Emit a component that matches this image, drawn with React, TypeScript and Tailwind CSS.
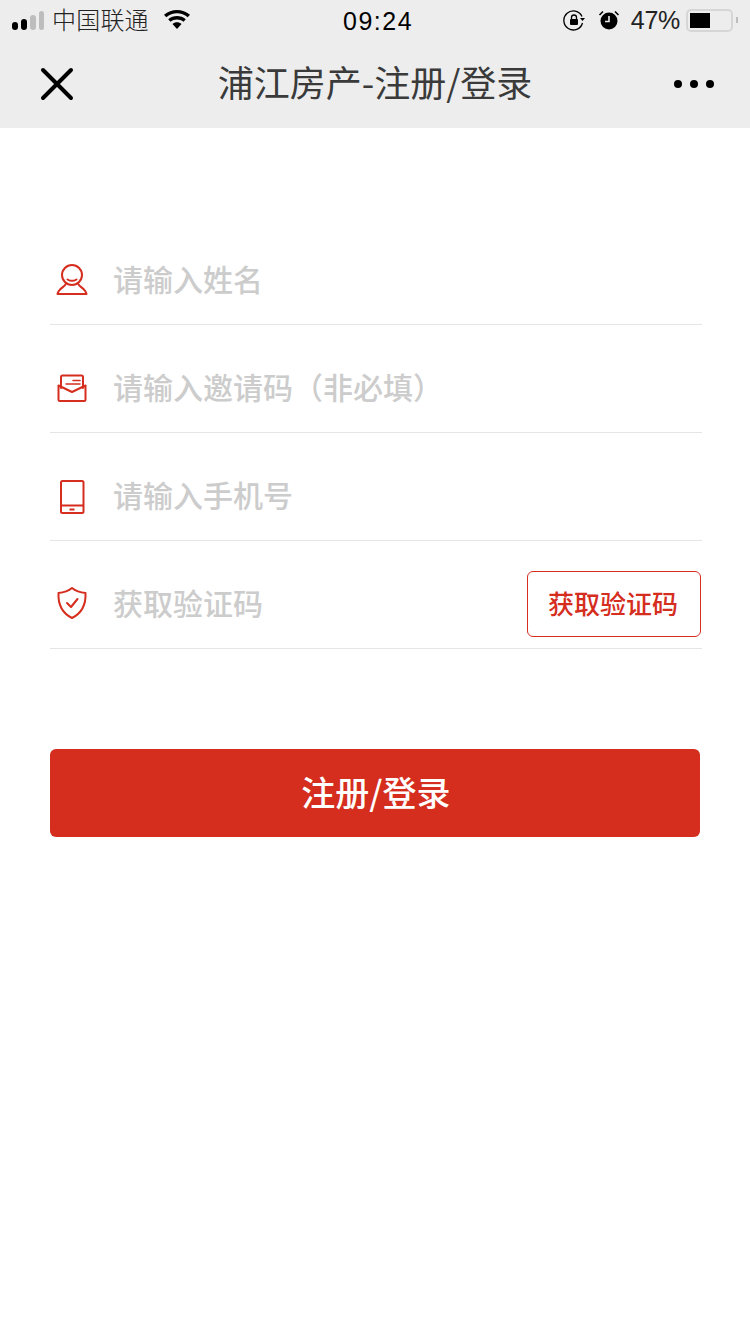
import { useState } from 'react';

const FONT = "font-['Noto_Sans_CJK_SC','Liberation_Sans',sans-serif]";

function UserIcon() {
  return (
    <svg width="32" height="32" viewBox="0 0 32 32" fill="none" stroke="#d52d1e" strokeWidth="2" strokeLinejoin="round" strokeLinecap="round">
      <circle cx="16" cy="11" r="10" />
      <path d="M11.500 15.500c2.500 1.500 6.500 1.500 9 0" />
      <path d="M10 19.500c-1 3.500-7.500 5-8.500 10.500h29C29.500 24.500 23 23 22 19.500" />
    </svg>
  );
}

function MailIcon() {
  return (
    <svg width="32" height="32" viewBox="0 0 32 32" fill="none" stroke="#d52d1e" strokeWidth="2" strokeLinejoin="round" strokeLinecap="round">
      <path d="M5 16V5C5 4 5.500 3.500 6.500 3.500h19c1 0 1.500.5 1.500 1.500v11" />
      <path d="M2.500 13.500v14c0 1 .5 1.500 1.500 1.500h24c1 0 1.500-.5 1.500-1.500v-14L16 20z" />
      <path d="M10 12h14M17 8.500h7" strokeWidth="1.500" />
    </svg>
  );
}

function PhoneIcon() {
  return (
    <svg className="mt-[2px]" width="32" height="34" viewBox="0 0 32 34" fill="none" stroke="#d52d1e" strokeWidth="2" strokeLinejoin="round">
      <rect x="5" y="1" width="22.500" height="32" rx="1.500" />
      <path d="M5 25.500h22.500" />
      <path d="M13.500 29.500h5" />
    </svg>
  );
}

function ShieldIcon() {
  return (
    <svg className="mb-[2px]" width="32" height="34" viewBox="0 0 32 34" fill="none" stroke="#d52d1e" strokeWidth="2" strokeLinejoin="round" strokeLinecap="round">
      <path d="M16 2c3 2.500 8 4.500 13.500 5 .5 10-2.500 19.500-13.500 25C5 26.500 2 17 2.500 7 8 6.500 13 4.500 16 2z" />
      <path d="M11 17l4 4 6.500-8" />
    </svg>
  );
}

function SignalDots() {
  return (
    <div className="flex items-end gap-[3px]">
      <span className="w-[6px] h-[8px] rounded-full bg-black" />
      <span className="w-[6px] h-[11px] rounded-full bg-black" />
      <span className="w-[6px] h-[15px] rounded-full bg-[#bdbdbd]" />
      <span className="w-[5px] h-[19px] rounded-full bg-[#bdbdbd]" />
    </div>
  );
}

function Wifi() {
  return (
    <svg width="28" height="20" viewBox="0 0 28 20" fill="#000">
      <path d="M14 20l-4.500-5c2.500-2.200 6.500-2.200 9 0z" />
      <path d="M7.500 12.800L5.200 10.300c5-4.300 12.600-4.300 17.600 0l-2.300 2.500c-3.700-3.100-9.300-3.100-13 0z" />
      <path d="M3.300 8.200L1 5.700c7.400-6.400 18.600-6.400 26 0l-2.300 2.500C18.500 2.800 9.500 2.800 3.300 8.200z" />
    </svg>
  );
}

function StatusBar() {
  return (
    <div className="h-10 flex items-center justify-between relative text-black">
      <div className="flex items-center">
        <div className="ml-3"><SignalDots /></div>
        <span className="ml-[8px] text-[24px] leading-none tracking-[0.2px] font-light text-[#222] pb-[2px]">中国联通</span>
        <div className="ml-[14px] mb-[2px]"><Wifi /></div>
      </div>
      <span className="absolute left-[343px] top-[6px] text-[25px] leading-[30px] tracking-[1.500px] font-['Liberation_Sans',sans-serif]">09:24</span>
      <div className="flex items-center">
        <svg width="22" height="22" viewBox="0 0 22 22" fill="none" stroke="#000" strokeWidth="1.300">
          <path d="M19 7.500A9.500 9.500 0 1 0 19.500 14" />
          <path d="M17 9h5l-2.500 3z" fill="#000" stroke="none" />
          <rect x="7" y="10" width="8" height="6" rx="1" fill="#000" stroke="none" />
          <path d="M8.500 10V8.500a2.500 2.500 0 0 1 5 0V10" />
        </svg>
        <svg className="ml-[13px]" width="22" height="22" viewBox="0 0 22 22" fill="#000">
          <circle cx="11" cy="12" r="8.500" />
          <path d="M11 7v5.500H7" fill="none" stroke="#ececec" strokeWidth="1.600" />
          <path d="M1.500 6L5 2.500M20.500 6L17 2.500" stroke="#000" strokeWidth="1.600" />
        </svg>
        <span className="ml-[11px] text-[25px] leading-none tracking-[-0.3px] text-[#222] font-['Liberation_Sans',sans-serif] font-light">47%</span>
        <div className="ml-[6px] w-[47px] h-[23px] rounded-[5px] border-2 border-[#d6d6d6] p-[2px]">
          <div className="w-[20px] h-full bg-black" />
        </div>
        <div className="ml-[3px] mr-[12px] w-[2px] h-[6px] bg-[#bdbdbd]" />
      </div>
    </div>
  );
}

function NavBar() {
  return (
    <div className="h-[88px] flex items-center justify-between relative">
      <svg className="ml-[40px]" width="34" height="34" viewBox="0 0 34 34" stroke="#000" strokeWidth="4" strokeLinecap="round">
        <path d="M3 3l28 28M31 3L3 31" />
      </svg>
      <span className="absolute left-0 right-0 text-center text-[36px] leading-[44px] text-[#3a3a3a] pb-[7px]">浦江房产-注册/登录</span>
      <div className="mr-[36px] flex gap-[8px]">
        <span className="w-[8px] h-[8px] rounded-full bg-black" />
        <span className="w-[8px] h-[8px] rounded-full bg-black" />
        <span className="w-[8px] h-[8px] rounded-full bg-black" />
      </div>
    </div>
  );
}

function Field({ icon, placeholder, children }: { icon: React.ReactNode; placeholder: string; children?: React.ReactNode }) {
  const [value, setValue] = useState('');
  return (
    <div className="h-[108px] flex items-center border-b border-[#e6e6e6] pt-[18px]">
      <div className="w-[44px] flex justify-center">{icon}</div>
      <input
        value={value}
        onChange={(e) => setValue(e.target.value)}
        placeholder={placeholder}
        className="flex-1 min-w-0 ml-[19px] mb-[3px] text-[30px] font-medium leading-[40px] outline-none placeholder:text-[#cccccc] text-[#333]"
      />
      {children}
    </div>
  );
}

export default function App() {
  return (
    <div className={`w-[750px] h-[1334px] bg-white ${FONT}`}>
      <div className="bg-[#ededed]">
        <StatusBar />
        <NavBar />
      </div>
      <div className="ml-[50px] mr-[48px] mt-[89px]">
        <Field icon={<UserIcon />} placeholder="请输入姓名" />
        <Field icon={<MailIcon />} placeholder="请输入邀请码（非必填）" />
        <Field icon={<PhoneIcon />} placeholder="请输入手机号" />
        <Field icon={<ShieldIcon />} placeholder="获取验证码">
          <button className="w-[174px] h-[66px] mr-[1px] pr-[2px] pb-[2px] rounded-[6px] border border-[#d52d1e] text-[#d52d1e] text-[26px] font-medium leading-none">
            获取验证码
          </button>
        </Field>
      </div>
      <button className="block ml-[50px] mt-[100px] w-[650px] h-[88px] pl-[2px] pb-[3px] rounded-[6px] bg-[#d52d1e] text-white text-[34px] font-medium leading-none">
        注册/登录
      </button>
    </div>
  );
}
